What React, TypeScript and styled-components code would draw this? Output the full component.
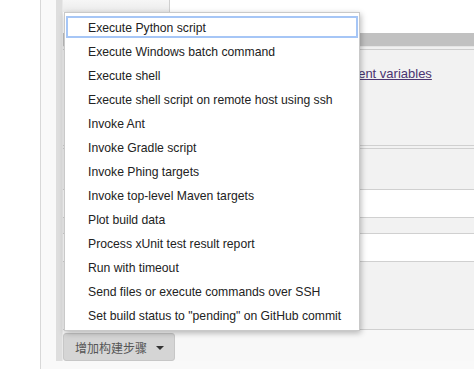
import React from 'react';
import styled, { createGlobalStyle } from 'styled-components';

const GlobalStyle = createGlobalStyle`
  body {
    margin: 0;
    background: #fff;
    font-family: 'Liberation Sans', Arial, sans-serif;
  }
`;

const STEPS = [
  'Execute Python script',
  'Execute Windows batch command',
  'Execute shell',
  'Execute shell script on remote host using ssh',
  'Invoke Ant',
  'Invoke Gradle script',
  'Invoke Phing targets',
  'Invoke top-level Maven targets',
  'Plot build data',
  'Process xUnit test result report',
  'Run with timeout',
  'Send files or execute commands over SSH',
  'Set build status to "pending" on GitHub commit',
];

const Page = styled.div`
  display: flex;
  height: 369px;
  overflow: hidden;
`;

const Gutter = styled.div`
  width: 40px;
  flex: 0 0 auto;
  background: #fff;
`;

const Section = styled.div`
  flex: 1;
  border-left: 1px solid #d8d8d8;
  background: #f9f9f9;
  padding-left: 15px;
`;

const Block = styled.div`
  display: flex;
  flex-direction: column;
  border-left: 6px solid #dedede;
`;

const Content = styled.div`
  display: flex;
  flex-direction: column;
  border-left: 1px solid #e9e9e9;
`;

const TopRow = styled.div`
  display: flex;
  height: 12px;
  background: #fff;
`;

const TopTab = styled.div`
  width: 106px;
  background: linear-gradient(#f6f6f6, #ebebeb);
  border-right: 1px solid #cfcfcf;
`;

interface IBand {
  $h: number;
  $tone?: 'grey' | 'white' | 'header';
  $line?: boolean;
}

const toneColor = { grey: '#f2f2f2', white: '#fff', header: '#c1c1c1' };

const Band = styled.div<IBand>`
  box-sizing: border-box;
  height: ${p => p.$h}px;
  background: ${p => toneColor[p.$tone || 'grey']};
  border-bottom: ${p => (p.$line ? '1px solid #d0d0d0' : 'none')};
`;

const Rule = styled.div`
  box-sizing: border-box;
  height: 4px;
  background: #f0f0f0;
  border-top: 1px solid #e4e4e4;
  border-bottom: 1px solid #cdcdcd;
`;

const LinkRow = styled(Band)`
  padding: 14px 0 0 207px;
`;

const EnvLink = styled.a`
  font-size: 13px;
  color: #4b3571;
  text-decoration: underline;
`;

const Footer = styled.div`
  background: #f8f8f8;
  padding: 3px 0 0;
`;

const Anchor = styled.div`
  position: relative;
  display: flex;
`;

const AddButton = styled.button`
  display: inline-flex;
  align-items: center;
  gap: 9px;
  box-sizing: border-box;
  height: 28px;
  padding: 0 10px 0 11px;
  border: 1px solid #c7c7c7;
  border-radius: 3px;
  background: #d5d5d5;
  color: #555;
  font-family: 'Noto Sans CJK SC', sans-serif;
  font-size: 12px;
`;

const Caret = styled.span`
  width: 0;
  height: 0;
  border-left: 4px solid transparent;
  border-right: 4px solid transparent;
  border-top: 4px solid #333;
  margin-top: 2px;
`;

const Menu = styled.ul`
  position: absolute;
  left: 1px;
  bottom: calc(100% + 2px);
  width: 296px;
  box-sizing: border-box;
  margin: 0;
  padding: 2px 0 3px;
  list-style: none;
  background: #fff;
  border: 1px solid #c9c9c9;
  box-shadow: 1px 2px 6px rgba(0, 0, 0, 0.28);
  z-index: 10;
`;

const MenuItem = styled.li<{ $focused?: boolean }>`
  box-sizing: border-box;
  height: 24px;
  padding: 2px 0 0 23px;
  line-height: 22px;
  font-size: 12.2px;
  color: #222;
  white-space: nowrap;
  outline: ${p => (p.$focused ? '2px solid #a6c6f6' : 'none')};
  outline-offset: -3px;
`;

export default function App() {
  return (
    <>
      <GlobalStyle />
      <Page>
        <Gutter />
        <Section>
          <Block>
            <Content>
              <TopRow>
                <TopTab />
              </TopRow>
              <Band $h={21} $tone="white" />
              <Band $h={13} $tone="header" />
              <Rule />
              <LinkRow $h={96} $line>
                <EnvLink>Inject environment variables</EnvLink>
              </LinkRow>
              <Band $h={3} $line />
              <Band $h={41} $line />
              <Band $h={28} $tone="white" $line />
              <Band $h={16} $line />
              <Band $h={28} $tone="white" $line />
              <Band $h={68} $line />
              <Footer>
                <Anchor>
                  <Menu>
                    {STEPS.map((s, i) => (
                      <MenuItem key={s} $focused={i === 0}>
                        {s}
                      </MenuItem>
                    ))}
                  </Menu>
                  <AddButton>
                    增加构建步骤
                    <Caret />
                  </AddButton>
                </Anchor>
              </Footer>
            </Content>
          </Block>
        </Section>
      </Page>
    </>
  );
}
